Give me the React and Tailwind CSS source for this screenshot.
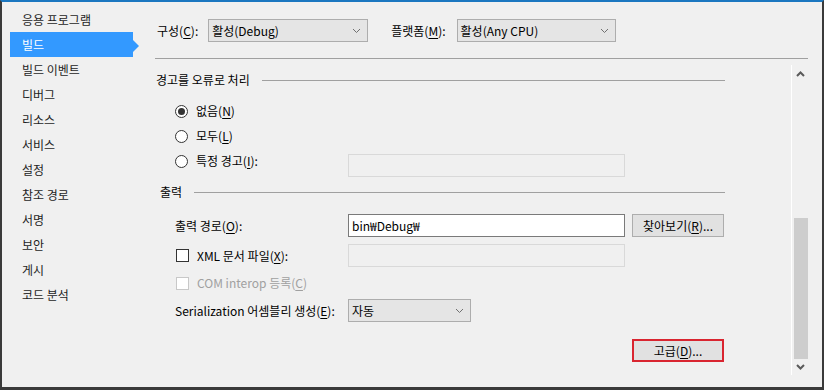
import React from 'react';

const NAV = ['응용 프로그램', '빌드', '빌드 이벤트', '디버그', '리소스', '서비스', '설정', '참조 경로', '서명', '보안', '게시', '코드 분석'];

const Key = ({ pre, k, post = '' }) => (
  <span>
    {pre}(<span className="underline underline-offset-[2px]">{k}</span>){post}
  </span>
);

const Chevron = ({ up = false, thin = false }) => (
  <svg width="9" height="6" viewBox="0 0 9 6" className="block">
    <polyline
      points={up ? '1,5 4.5,1.5 8,5' : '1,1 4.5,4.5 8,1'}
      fill="none"
      stroke={thin ? '#707070' : '#5a5a5a'}
      strokeWidth={thin ? 1 : 2}
    />
  </svg>
);

const Select = ({ value, width }) => (
  <div className={`h-[23px] ${width} flex items-center justify-between bg-[#e5e5e5] border border-[#adadad] pl-[3px] pr-[6px]`}>
    <span>{value}</span>
    <Chevron thin />
  </div>
);

const Radio = ({ checked }) => (
  <span className="w-[13px] h-[13px] rounded-full border border-[#333] bg-white flex items-center justify-center shrink-0">
    {checked && <span className="w-[7px] h-[7px] rounded-full bg-[#333]" />}
  </span>
);

const Check = ({ disabled }) => (
  <span className={`w-[13px] h-[13px] border bg-white shrink-0 ${disabled ? 'border-[#c8c8c8]' : 'border-[#333]'}`} />
);

const Heading = ({ children, className = '' }) => (
  <div className={`flex items-center h-[22px] pr-[66px] ${className}`}>
    <span className="pl-[1px]">{children}</span>
    <div className="flex-1 h-px bg-[#a0a0a0] ml-[12px]" />
  </div>
);

const Button = ({ children, red }) => (
  <div className={`w-[92px] h-[23px] flex items-center justify-center bg-[#e1e1e1] ${red ? 'border-2 border-[#d92530]' : 'border border-[#adadad]'}`}>
    {children}
  </div>
);

export default function App() {
  return (
    <div
      className="w-[824px] h-[390px] bg-[#f0f0f0] border-t-2 border-t-[#1b77c0] border-x-2 border-x-[#3a3a3a] border-b-[3px] border-b-[#3a3a3a] flex text-[12px] text-black overflow-hidden"
      style={{ fontFamily: '"Noto Sans CJK KR", "Noto Sans", sans-serif' }}
    >
      {/* 왼쪽 메뉴 */}
      <div className="w-[153px] shrink-0 pt-[5px] pl-[8px]">
        {NAV.map((item) => {
          const active = item === '빌드';
          return (
            <div key={item} className="relative h-[25px] w-[123px]">
              <div className={`h-full flex items-center pl-[12px] ${active ? 'bg-[#3399ff] text-white' : 'text-[#1e1e1e]'}`}>
                {item}
              </div>
              {active && (
                <span className="absolute left-full top-[8px] w-0 h-0 border-y-[6px] border-y-transparent border-l-[6px] border-l-[#3399ff]" />
              )}
            </div>
          );
        })}
      </div>

      {/* 본문 */}
      <div className="flex-1 flex flex-col pr-[14px]">
        <div className="flex items-center pt-[17px] h-[40px] pl-[2px]">
          <Key pre="구성" k="C" post=":" />
          <div className="ml-[10px]">
            <Select value="활성(Debug)" width="w-[160px]" />
          </div>
          <span className="ml-[23px]">
            <Key pre="플랫폼" k="M" post=":" />
          </span>
          <div className="ml-[11px]">
            <Select value="활성(Any CPU)" width="w-[159px]" />
          </div>
        </div>
        <div className="h-px bg-[#a0a0a0] mt-[16px]" />

        <div className="flex-1 flex">
          <div className="flex-1 flex flex-col pt-[10px]">
            <Heading>경고를 오류로 처리</Heading>

            <div className="pl-[20px] flex flex-col">
              <div className="h-[22px] mt-[9px] flex items-center gap-[8px]">
                <Radio checked />
                <Key pre="없음" k="N" />
              </div>
              <div className="h-[22px] mt-[3px] flex items-center gap-[8px]">
                <Radio />
                <Key pre="모두" k="L" />
              </div>
              <div className="h-[24px] mt-[6px] flex items-center">
                <div className="w-[173px] flex items-center gap-[8px] mb-[8px]">
                  <Radio />
                  <Key pre="특정 경고" k="I" post=":" />
                </div>
                <div className="w-[277px] h-[23px] border border-[#d9d9d9] bg-[#f0f0f0]" />
              </div>
            </div>

            <Heading className="mt-[4px]">
              <span className="pl-[4px]">출력</span>
            </Heading>

            <div className="pl-[20px] flex flex-col">
              <div className="h-[23px] mt-[11px] flex items-center">
                <div className="w-[173px]">
                  <Key pre="출력 경로" k="O" post=":" />
                </div>
                <div className="w-[277px] h-[23px] border border-[#7a7a7a] bg-white flex items-center pl-[3px]">
                  bin₩Debug₩
                </div>
                <div className="ml-[7px]">
                  <Button>
                    <Key pre="찾아보기" k="R" post="..." />
                  </Button>
                </div>
              </div>

              <div className="h-[23px] mt-[7px] flex items-center">
                <div className="w-[173px] flex items-center gap-[8px] pl-[1px]">
                  <Check />
                  <Key pre="XML 문서 파일" k="X" post=":" />
                </div>
                <div className="w-[277px] h-[23px] border border-[#d9d9d9] bg-[#f0f0f0]" />
              </div>

              <div className="h-[20px] mt-[6px] flex items-center gap-[8px] pl-[1px] text-[#a0a0a0]">
                <Check disabled />
                <Key pre="COM interop 등록" k="C" />
              </div>

              <div className="h-[23px] mt-[6px] flex items-center">
                <div className="w-[173px] whitespace-nowrap">
                  Serialization 어셈블리 생성(<span className="underline underline-offset-[2px]">E</span>):
                </div>
                <Select value="자동" width="w-[123px]" />
              </div>

              <div className="h-[23px] mt-[17px] flex">
                <div className="ml-[457px]">
                  <Button red>
                    <Key pre="고급" k="D" post="..." />
                  </Button>
                </div>
              </div>
            </div>
          </div>

          {/* 스크롤 막대 */}
          <div className="w-[17px] mt-[6px] h-[310px] border-l border-white flex flex-col items-center">
            <div className="h-[17px] flex items-center justify-center">
              <Chevron up />
            </div>
            <div className="flex-1" />
            <div className="w-[14px] h-[141px] bg-[#cdcdcd] ml-[1px]" />
            <div className="h-[16px] flex items-center justify-center">
              <Chevron />
            </div>
          </div>
        </div>
      </div>
    </div>
  );
}
